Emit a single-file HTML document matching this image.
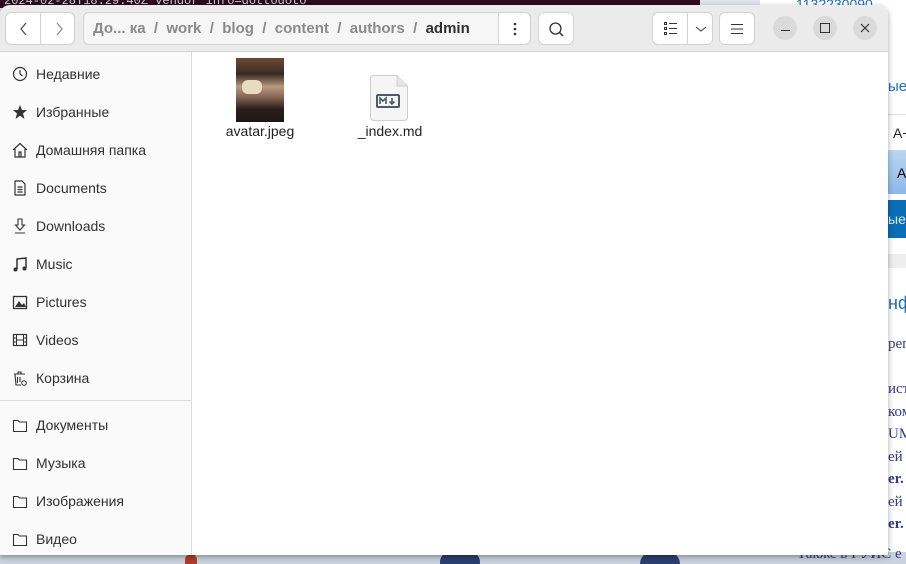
<!DOCTYPE html>
<html><head><meta charset="utf-8">
<style>
*{margin:0;padding:0;box-sizing:border-box}
body{width:906px;height:564px;overflow:hidden;position:relative;font-family:"Liberation Sans","DejaVu Sans",sans-serif;background:#dfe3ea}
.term{position:absolute;left:0;top:0;width:700px;height:8px;background:#2c0a22;color:#ccc;font:12px "Liberation Mono",monospace;line-height:2px;padding-left:4px}
.right{position:absolute;left:760px;top:0;width:146px;height:564px;background:#fff;font-size:15px}
.bot{position:absolute;left:0;top:552px;width:906px;height:12px;background:#c9d2de}
.win{position:absolute;left:0;top:5px;width:888px;height:550px;background:#fff;border-radius:10px 10px 0 0;box-shadow:0 2px 6px rgba(0,0,0,.35);overflow:hidden}
.hdr{position:absolute;left:0;top:0;width:888px;height:47px;background:#ebebeb;border-bottom:1px solid #d6d6d6}
.btn{position:absolute;background:#fff;border:1px solid #d2d2d2;border-radius:6px;height:33px;top:7px}
.side{position:absolute;left:0;top:47px;width:192px;height:503px;background:#fafafa;border-right:1px solid #dcdcdc}
.it{position:absolute;left:36px;font-size:14px;color:#303030}
.ic{position:absolute;left:11px;width:18px;height:18px}
.path{position:absolute;left:83px;top:7px;width:448px;height:33px;background:#f6f6f6;border:1px solid #d2d2d2;border-radius:6px;font-size:15px;font-weight:bold;color:#8a8a8a;line-height:31px;padding-left:9px;white-space:nowrap;overflow:hidden}
.wc{position:absolute;top:11px;width:24px;height:24px;border-radius:12px;background:#dadada}
</style></head><body>
<div class="term">2024-02-28T18:29:40Z vendor info=dottodoto</div>
<div class="right">
 <div style="position:absolute;left:36px;top:-4px;color:#1e6fb8;font-size:14px">1132230090 Арде</div>
 <div style="position:absolute;left:128px;top:78px;color:#1e6fb8">ые</div>
 <div style="position:absolute;left:128px;top:114px;width:18px;border-top:1px solid #ddd"></div>
 <div style="position:absolute;left:133px;top:125px;color:#222;font-size:14px">А+</div>
 <div style="position:absolute;left:128px;top:150px;width:18px;height:44px;background:linear-gradient(#bcd6f2,#8bb8e8)"><span style="position:absolute;left:9px;top:15px;font-size:14px">А</span></div>
 <div style="position:absolute;left:128px;top:200px;width:18px;height:38px;background:#0b6db5;color:#d7e8f7;padding-top:11px;font-size:14px">ые</div>
 <div style="position:absolute;left:128px;top:254px;width:18px;height:14px;background:#eee"></div>
 <div style="position:absolute;left:128px;top:293px;color:#1e6fb8;font-size:18px">нф</div>
 <div style="position:absolute;left:128px;top:333px;color:#333a8a;font-family:'Liberation Serif';font-size:15px;line-height:22.5px">реп<br><br>истр<br>ком<br>UM<br>ей<br><b>er.</b><br>ей<br><b>er.</b></div>
</div>
<div class="bot"><div style="position:absolute;left:440px;top:0;width:40px;height:12px;background:#2b3f70;border-radius:10px 10px 0 0"></div><div style="position:absolute;left:640px;top:0;width:40px;height:12px;background:#2b3f70;border-radius:12px 12px 0 0"></div><div style="position:absolute;left:185px;top:2px;width:12px;height:10px;background:#b23a2a;border-radius:6px 6px 0 0"></div><div style="position:absolute;left:797px;top:-6px;color:#333a8a;font-family:'Liberation Serif';font-size:15px">Также в ГУИС е</div></div>
<div class="win">
 <div class="hdr">
  <div class="btn" style="left:5px;width:70px"><div style="position:absolute;left:34px;top:0;width:1px;height:31px;background:#d2d2d2"></div>
   <svg style="position:absolute;left:12px;top:9px" width="12" height="14"><path d="M8 1L3 7L8 13" stroke="#444" fill="none" stroke-width="1.2"/></svg>
   <svg style="position:absolute;left:47px;top:9px" width="12" height="14"><path d="M4 1L9 7L4 13" stroke="#888" fill="none" stroke-width="1.2"/></svg></div>
  <div class="path">До... ка&nbsp; / &nbsp;work&nbsp; / &nbsp;blog&nbsp; / &nbsp;content&nbsp; / &nbsp;authors&nbsp; / &nbsp;<span style="color:#303030">admin</span></div>
  <div style="position:absolute;left:498px;top:7px;width:33px;height:33px;background:#fff;border:1px solid #d2d2d2;border-radius:0 6px 6px 0"><svg style="position:absolute;left:14px;top:9px" width="4" height="14"><circle cx="2" cy="2" r="1.3" fill="#333"/><circle cx="2" cy="7" r="1.3" fill="#333"/><circle cx="2" cy="12" r="1.3" fill="#333"/></svg></div>
  <div class="btn" style="left:538px;width:36px"><svg style="position:absolute;left:9px;top:8px" width="18" height="18"><circle cx="7.5" cy="7.5" r="5.5" stroke="#333" fill="none" stroke-width="1.3"/><path d="M11.5 11.5L15 15" stroke="#333" stroke-width="1.5"/></svg></div>
  <div class="btn" style="left:652px;width:61px"><div style="position:absolute;left:34px;top:0;width:1px;height:31px;background:#d2d2d2"></div>
   <svg style="position:absolute;left:11px;top:9px" width="14" height="14"><g fill="none" stroke="#333"><rect x="0.5" y="0.5" width="2" height="2"/><rect x="0.5" y="5.5" width="2" height="2"/><rect x="0.5" y="10.5" width="2" height="2"/></g><path d="M5 1.5H13M5 6.5H13M5 11.5H13" stroke="#333"/></svg>
   <svg style="position:absolute;left:42px;top:11px" width="12" height="10"><path d="M1 3L6 7L11 3" stroke="#444" fill="none" stroke-width="1.1"/></svg></div>
  <div class="btn" style="left:719px;width:36px"><svg style="position:absolute;left:10px;top:10px" width="14" height="12"><path d="M1 1.5H13M1 6H13M1 10.5H13" stroke="#333" stroke-width="1.1"/></svg></div>
  <div class="wc" style="left:773px"><div style="position:absolute;left:8px;top:14px;width:9px;height:1px;background:#333"></div></div>
  <div class="wc" style="left:813px"><div style="position:absolute;left:7px;top:7px;width:10px;height:10px;border:1px solid #333"></div></div>
  <div class="wc" style="left:853px"><svg style="position:absolute;left:7px;top:7px" width="10" height="10"><path d="M1 1L9 9M9 1L1 9" stroke="#333" stroke-width="1.2"/></svg></div>
 </div>
 <div class="side">
  <svg class="ic" style="top:13px"><circle cx="9" cy="9" r="6.5" stroke="#333" fill="none" stroke-width="1.2"/><path d="M9 5V9L11.5 11" stroke="#333" fill="none" stroke-width="1.2"/></svg><div class="it" style="top:14px">Недавние</div>
  <svg class="ic" style="top:51px"><path d="M9 2L11 7H16L12 10.5L13.5 16L9 12.8L4.5 16L6 10.5L2 7H7Z" fill="#333"/></svg><div class="it" style="top:52px">Избранные</div>
  <svg class="ic" style="top:89px"><path d="M2 9L9 2.5L16 9M4 8V16H14V8M8 16V11H10V16" stroke="#333" fill="none" stroke-width="1.2"/></svg><div class="it" style="top:90px">Домашняя папка</div>
  <svg class="ic" style="top:127px"><path d="M4 2H11L14 5V16H4Z M6.5 8H11.5M6.5 10.5H11.5M6.5 13H11.5" stroke="#333" fill="none" stroke-width="1.2"/></svg><div class="it" style="top:128px">Documents</div>
  <svg class="ic" style="top:165px"><path d="M7 2H11V8H13.5L9 13L4.5 8H7Z M4 16H14" stroke="#333" fill="none" stroke-width="1.1"/></svg><div class="it" style="top:166px">Downloads</div>
  <svg class="ic" style="top:203px"><path d="M6 14V4L15 3V13" stroke="#333" fill="none" stroke-width="1.5"/><circle cx="4.5" cy="14.5" r="2" fill="#333"/><circle cx="13.5" cy="13.5" r="2" fill="#333"/></svg><div class="it" style="top:204px">Music</div>
  <svg class="ic" style="top:241px"><rect x="2.5" y="3.5" width="13" height="12" stroke="#333" fill="none" stroke-width="1.3"/><path d="M4 14L8 8L11 12L13 10L15 14Z" fill="#333"/></svg><div class="it" style="top:242px">Pictures</div>
  <svg class="ic" style="top:279px"><rect x="2.5" y="3.5" width="13" height="11" stroke="#333" fill="none" stroke-width="1.2"/><path d="M5.5 3.5V14.5M12.5 3.5V14.5M2.5 7H5.5M2.5 11H5.5M12.5 7H15.5M12.5 11H15.5M5.5 9H12.5" stroke="#333" fill="none" stroke-width="1"/></svg><div class="it" style="top:280px">Videos</div>
  <svg class="ic" style="top:317px"><path d="M3 5H14M7 5V3H10V5M4 5L5 16H10M6.5 8V14M9 8V13" stroke="#333" fill="none" stroke-width="1.1"/><circle cx="13" cy="14" r="2.3" stroke="#333" fill="none"/></svg><div class="it" style="top:318px">Корзина</div>
  <div style="position:absolute;left:0;top:348px;width:191px;height:1px;background:#dcdcdc"></div>
  <svg class="ic" style="top:364px"><path d="M2.5 4.5H7L8.5 6H15.5V15.5H2.5Z" stroke="#333" fill="none" stroke-width="1.1"/></svg><div class="it" style="top:365px">Документы</div>
  <svg class="ic" style="top:402px"><path d="M2.5 4.5H7L8.5 6H15.5V15.5H2.5Z" stroke="#333" fill="none" stroke-width="1.1"/></svg><div class="it" style="top:403px">Музыка</div>
  <svg class="ic" style="top:440px"><path d="M2.5 4.5H7L8.5 6H15.5V15.5H2.5Z" stroke="#333" fill="none" stroke-width="1.1"/></svg><div class="it" style="top:441px">Изображения</div>
  <svg class="ic" style="top:478px"><path d="M2.5 4.5H7L8.5 6H15.5V15.5H2.5Z" stroke="#333" fill="none" stroke-width="1.1"/></svg><div class="it" style="top:479px">Видео</div>
 </div>
 <div style="position:absolute;left:236px;top:53px;width:48px;height:64px;background:linear-gradient(180deg,#6b4a35 0%,#3a2a22 25%,#b89a80 45%,#8a6a55 60%,#2a1d1a 80%,#1e1616 100%)"><div style="position:absolute;left:6px;top:22px;width:20px;height:14px;background:#e7dcc0;border-radius:6px"></div></div>
 <div style="position:absolute;left:200px;top:118px;width:120px;text-align:center;font-size:14px;color:#222">avatar.jpeg</div>
 <svg style="position:absolute;left:369px;top:69px" width="40" height="48"><path d="M5 1.5H28L38.5 12V43Q38.5 46.5 35 46.5H5Q1.5 46.5 1.5 43V5Q1.5 1.5 5 1.5Z" fill="#f5f5f5" stroke="#cfcfcf"/><path d="M28 1.5V12H38.5" fill="#e6e6e6" stroke="#cfcfcf"/><rect x="8" y="21" width="22" height="12" rx="1" fill="none" stroke="#4c5b66" stroke-width="2"/><path d="M11 30V24L14 27L17 24V30M23 24V30M20.5 27.5L23 30L25.5 27.5" stroke="#4c5b66" fill="none" stroke-width="1.6"/></svg>
 <div style="position:absolute;left:330px;top:118px;width:120px;text-align:center;font-size:14px;color:#222">_index.md</div>
</div>
</body></html>
